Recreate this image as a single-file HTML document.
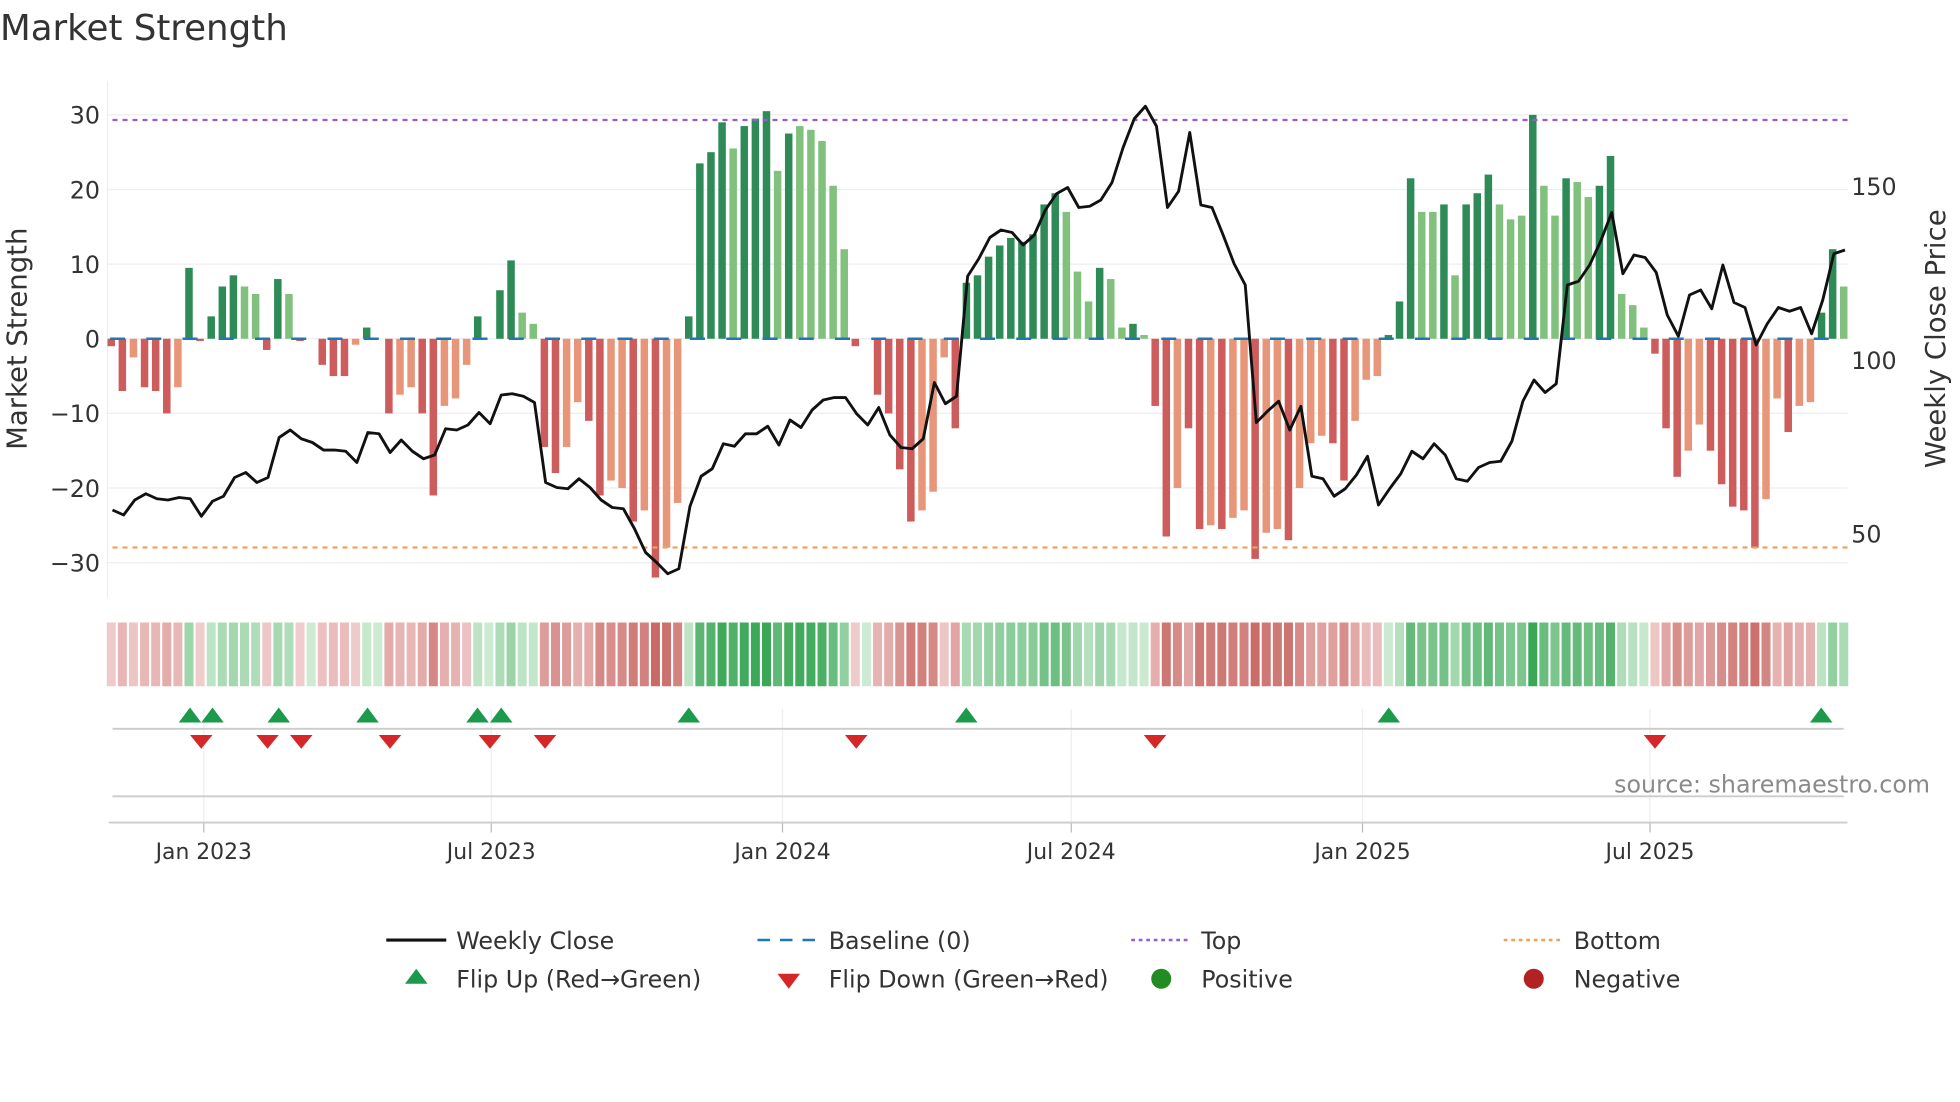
<!DOCTYPE html>
<html><head><meta charset="utf-8"><style>
html,body{margin:0;padding:0;background:#fff;width:1960px;height:1102px;overflow:hidden}
svg{display:block}
text{font-family:"DejaVu Sans","Liberation Sans",sans-serif;fill:#333}
</style></head><body>
<svg id="s" width="1960" height="1102" viewBox="0 0 1568 881.6" xmlns="http://www.w3.org/2000/svg">
<text x="0" y="32" font-size="28.5">Market Strength</text>
<g id="grid"></g>
<g id="bars"></g>
<g id="line"></g>
<g id="heat"></g>
<g id="marks"></g>
<g id="axes"></g>
<text x="1544" y="634" font-size="19" text-anchor="end" style="fill:#8a8a8a">source: sharemaestro.com</text>
<g font-size="19">
<line x1="309" y1="752" x2="357" y2="752" stroke="#111" stroke-width="2.5"/><text x="365" y="759">Weekly Close</text>
<line x1="606" y1="752" x2="654" y2="752" stroke="#1f77b4" stroke-width="2" stroke-dasharray="10,8"/><text x="663" y="759">Baseline (0)</text>
<line x1="905" y1="752" x2="953" y2="752" stroke="#9b59d6" stroke-width="2" stroke-dasharray="3,3"/><text x="961" y="759">Top</text>
<line x1="1203" y1="752" x2="1251" y2="752" stroke="#f0a060" stroke-width="2" stroke-dasharray="3,3"/><text x="1259" y="759">Bottom</text>
<path d="M333,775 L342,787 L324,787Z" fill="#1a9a4a"/><text x="365" y="790">Flip Up (Red→Green)</text>
<path d="M622,779 L640,779 L631,791Z" fill="#d62728"/><text x="663" y="790">Flip Down (Green→Red)</text>
<circle cx="929" cy="783" r="8" fill="#228b22"/><text x="961" y="790">Positive</text>
<circle cx="1227" cy="783" r="8" fill="#b22222"/><text x="1259" y="790">Negative</text>
</g>
</svg>
<script>
var NS="http://www.w3.org/2000/svg";
function el(p,t,a){var e=document.createElementNS(NS,t);for(var k in a)e.setAttribute(k,a[k]);document.getElementById(p).appendChild(e);return e;}
var D=[[-1,0],[-7,0],[-2.5,1],[-6.5,0],[-7,0],[-10,0],[-6.5,1],[9.5,0],[-0.3,0],[3,0],[7,0],[8.5,0],[7,1],[6,1],[-1.5,0],[8,0],[6,1],[-0.3,0],[0,0],[-3.5,0],[-5,0],[-5,0],[-0.8,1],[1.5,0],[0,0],[-10,0],[-7.5,1],[-6.5,1],[-10,0],[-21,0],[-9,1],[-8,1],[-3.5,1],[3,0],[0,0],[6.5,0],[10.5,0],[3.5,1],[2,1],[-14.5,0],[-18,0],[-14.5,1],[-8.5,1],[-11,0],[-21,0],[-19,1],[-20,1],[-24.5,0],[-23,1],[-32,0],[-28,1],[-22,1],[3,0],[23.5,0],[25,0],[29,0],[25.5,1],[28.5,0],[29.5,0],[30.5,0],[22.5,1],[27.5,0],[28.5,1],[28,1],[26.5,1],[20.5,1],[12,1],[-1,0],[0,0],[-7.5,0],[-10,0],[-17.5,0],[-24.5,0],[-23,1],[-20.5,1],[-2.5,1],[-12,0],[7.5,0],[8.5,0],[11,0],[12.5,0],[13.5,0],[13,0],[14,0],[18,0],[19.5,0],[17,1],[9,1],[5,1],[9.5,0],[8,1],[1.5,1],[2,0],[0.5,1],[-9,0],[-26.5,0],[-20,1],[-12,0],[-25.5,0],[-25,1],[-25.5,0],[-24,1],[-23,1],[-29.5,0],[-26,1],[-25.5,1],[-27,0],[-20,1],[-14,1],[-13,1],[-14,0],[-19,0],[-11,1],[-5.5,1],[-5,1],[0.5,0],[5,0],[21.5,0],[17,1],[17,1],[18,0],[8.5,1],[18,0],[19.5,0],[22,0],[18,1],[16,1],[16.5,1],[30,0],[20.5,1],[16.5,1],[21.5,0],[21,1],[19,1],[20.5,0],[24.5,0],[6,1],[4.5,1],[1.5,1],[-2,0],[-12,0],[-18.5,0],[-15,1],[-11.5,1],[-15,0],[-19.5,0],[-22.5,0],[-23,0],[-28,0],[-21.5,1],[-8,1],[-12.5,0],[-9,1],[-8.5,1],[3.5,0],[12,0],[7,1]];
var n=D.length,x0=89,x1=1475,dx=(x1-x0)/(n-1),Y0=271,U=5.97;
[30,20,10,0,-10,-20,-30].forEach(function(v){var y=Y0-v*U;el("grid","line",{x1:86,x2:1478,y1:y,y2:y,stroke:"#eceef2","stroke-width":1});el("axes","text",{x:80,y:y+7,"font-size":19,"text-anchor":"end"}).textContent=(v<0?"−":"")+Math.abs(v);});
el("grid","line",{x1:86,x2:86,y1:65,y2:478,stroke:"#eceef2"});
var months=[[163,"Jan 2023"],[393,"Jul 2023"],[626,"Jan 2024"],[857,"Jul 2024"],[1090,"Jan 2025"],[1320,"Jul 2025"]];
months.forEach(function(m){el("grid","line",{x1:m[0],x2:m[0],y1:567,y2:658,stroke:"#eceef2"});el("axes","line",{x1:m[0],x2:m[0],y1:658,y2:666,stroke:"#bbb"});el("axes","text",{x:m[0],y:687,"font-size":17.5,"text-anchor":"middle"}).textContent=m[1];});
el("axes","line",{x1:90,x2:1475,y1:583,y2:583,stroke:"#ccc","stroke-width":1.5});
el("axes","line",{x1:90,x2:1475,y1:637,y2:637,stroke:"#ccc","stroke-width":1.5});
el("axes","line",{x1:87,x2:1478,y1:658,y2:658,stroke:"#ccc","stroke-width":1.5});
[[150,149],[100,288],[50,427]].forEach(function(r){el("axes","text",{x:1481,y:r[1]+7,"font-size":19}).textContent=r[0];});
var t=el("axes","text",{x:0,y:0,"font-size":22,"text-anchor":"middle",transform:"translate(21,271) rotate(-90)"});t.textContent="Market Strength";
t=el("axes","text",{x:0,y:0,"font-size":22,"text-anchor":"middle",transform:"translate(1556,271) rotate(-90)"});t.textContent="Weekly Close Price";
D.forEach(function(d,i){var v=d[0],x=x0+i*dx,h=Math.abs(v)*U,c;
if(v>=0)c=d[1]?"#82c07e":"#2e8b57";else c=d[1]?"#e8967a":"#cd5c5c";
if(h>0.5)el("bars","rect",{x:x-3,y:v>=0?Y0-h:Y0,width:6,height:h,fill:c});
var a=Math.min(1,Math.abs(v)/30),hc;
if(v>=0){hc="rgb("+Math.round(205-(205-58)*a)+","+Math.round(235-(235-167)*a)+","+Math.round(210-(210-87)*a)+")";}
else{hc="rgb("+Math.round(240-(240-201)*a)+","+Math.round(205-(205-106)*a)+","+Math.round(205-(205-102)*a)+")";}
el("heat","rect",{x:x-3.6,y:498,width:7.2,height:51,fill:hc});
});
el("bars","line",{x1:88,x2:1478,y1:Y0,y2:Y0,stroke:"#1f77b4","stroke-width":2,"stroke-dasharray":"12,17"});
el("bars","line",{x1:90,x2:1478,y1:96,y2:96,stroke:"#9b59d6","stroke-width":1.8,"stroke-dasharray":"4,4"});
el("bars","line",{x1:90,x2:1478,y1:438,y2:438,stroke:"#f0a060","stroke-width":1.8,"stroke-dasharray":"4,4"});
var L=[408,412,400,395,399,400,398,399,413,401,397,382,378,386,382,350,344,351,354,360,360,361,370,346,347,362,352,361,367,364,343,344,340,330,339,316,315,317,322,386,390,391,383,390,400,406,407,423,442,450,459,455,405,381,375,355,357,347,347,341,356,336,342,328,320,318,318,331,340,326,348,358,359,351,306,323,317,221,207,190,184,186,196,188,168,155,150,166,165,160,146,118,95,85,101,166,153,106,164,166,188,211,228,338,329,321,344,325,381,383,397,391,380,365,404,391,379,361,367,355,364,383,385,374,370,369,353,321,304,314,307,228,225,212,193,170,219,204,206,218,252,269,236,232,247,212,242,246,276,259,246,249,246,267,240,203,200];
var p=L.map(function(y,i){return (x0+1+i*(x1-x0)/(L.length-1)).toFixed(1)+","+y;}).join(" ");
el("line","polyline",{points:p,fill:"none",stroke:"#111","stroke-width":2.3,"stroke-linejoin":"round"});
[152,170,223,294,382,401,551,773,1111,1457].forEach(function(x){el("marks","path",{d:"M"+x+",566 L"+(x+9)+",578 L"+(x-9)+",578Z",fill:"#1a9a4a"});});
[161,214,241,312,392,436,685,924,1324].forEach(function(x){el("marks","path",{d:"M"+(x-9)+",588 L"+(x+9)+",588 L"+x+",599Z",fill:"#d62728"});});
</script>
</body></html>
